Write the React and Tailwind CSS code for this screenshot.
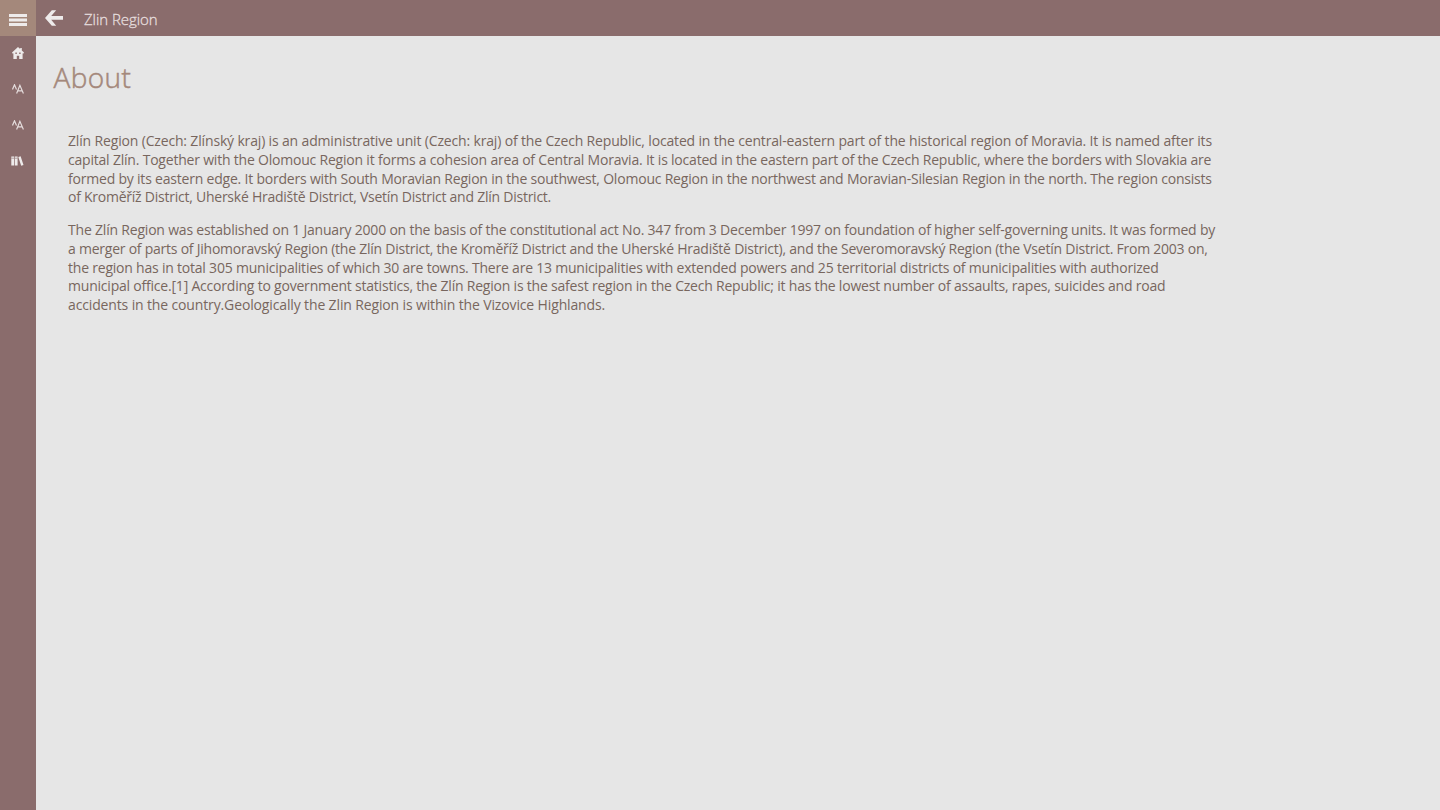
import React from 'react'

const paragraphs = [
  [
    { text: 'Zlín Region (Czech: Zlínský kraj) is an administrative unit (Czech: kraj) of the Czech Republic, located in the central-eastern part of the historical region of Moravia. It is named after its', tracking: 'tracking-[-0.16px]' },
    { text: 'capital Zlín. Together with the Olomouc Region it forms a cohesion area of Central Moravia. It is located in the eastern part of the Czech Republic, where the borders with Slovakia are', tracking: 'tracking-[-0.205px]' },
    { text: 'formed by its eastern edge. It borders with South Moravian Region in the southwest, Olomouc Region in the northwest and Moravian-Silesian Region in the north. The region consists', tracking: 'tracking-[-0.206px]' },
    { text: 'of Kroměříž District, Uherské Hradiště District, Vsetín District and Zlín District.', tracking: 'tracking-[-0.244px]' },
  ],
  [
    { text: 'The Zlín Region was established on 1 January 2000 on the basis of the constitutional act No. 347 from 3 December 1997 on foundation of higher self-governing units. It was formed by', tracking: 'tracking-[-0.2px]' },
    { text: 'a merger of parts of Jihomoravský Region (the Zlín District, the Kroměříž District and the Uherské Hradiště District), and the Severomoravský Region (the Vsetín District. From 2003 on,', tracking: 'tracking-[-0.235px]' },
    { text: 'the region has in total 305 municipalities of which 30 are towns. There are 13 municipalities with extended powers and 25 territorial districts of municipalities with authorized', tracking: 'tracking-[-0.213px]' },
    { text: 'municipal office.[1] According to government statistics, the Zlín Region is the safest region in the Czech Republic; it has the lowest number of assaults, rapes, suicides and road', tracking: 'tracking-[-0.21px]' },
    { text: 'accidents in the country.Geologically the Zlin Region is within the Vizovice Highlands.', tracking: 'tracking-[-0.138px]' },
  ],
]

const HomeIcon = () => (
  <svg width="12" height="12" viewBox="0 0 12 12" fill="#eeebeb">
    <path fillRule="evenodd" d="M6 0 L8.2 2 V1 H9.8 V3.5 L12 5.6 L11.2 6.7 L10.6 6.2 V12 H7.2 V8.8 H4.8 V12 H1.4 V6.2 L0.8 6.7 L0 5.6 Z M3.4 5.6 V7 H4.8 V5.6 Z M7.2 5.6 V7 H8.6 V5.6 Z" />
  </svg>
)

const FontIcon = () => (
  <svg className="mb-px" width="12" height="10" viewBox="0 0 12 10" fill="none" stroke="#e6dede" strokeWidth="1.15">
    <path d="M0.5 5.4 L2.5 0.7 L4.5 5.4" />
    <path d="M4.6 9.5 L7.9 1.3 L11.4 9.5 M5.7 6.8 H10.2" />
  </svg>
)

const LibraryIcon = () => (
  <svg className="mr-px" width="13" height="10" viewBox="0 0 13 10" fill="#eeebeb">
    <path d="M0.3 0.4 H3.1 V9.6 H0.3 Z M3.8 0.4 H6.6 V9.6 H3.8 Z M7.3 0.9 L9.6 0.2 L12.5 8.9 L10.2 9.7 Z" />
    <path d="M0.3 2.2 H3.1 M3.8 2.2 H6.6" stroke="#8a6c6c" strokeWidth="0.6" />
  </svg>
)

const items = [HomeIcon, FontIcon, FontIcon, LibraryIcon]

const App = () => {
  return (
    <div className="flex h-[810px] w-[1440px] overflow-hidden bg-[#e6e6e6] font-['Open_Sans','Noto_Sans',sans-serif]">
      <nav className="flex w-9 shrink-0 flex-col bg-[#8a6c6c]">
        <button className="flex h-9 w-9 items-center justify-center bg-[#a4887b] pt-1">
          <svg width="18" height="12" viewBox="0 0 18 12" fill="#eeebeb">
            <path d="M0 0 H18 V3 H0 Z M0 4.5 H18 V7.5 H0 Z M0 9 H18 V12 H0 Z" />
          </svg>
        </button>
        {items.map((Icon, i) => (
          <button key={i} className="flex h-9 w-9 items-center justify-center pb-0.5">
            <Icon />
          </button>
        ))}
      </nav>
      <div className="flex min-w-0 flex-1 flex-col">
        <header className="flex h-9 shrink-0 items-center bg-[#8a6c6c] pl-[9px]">
          <svg className="mb-px" width="18" height="16" viewBox="0 0 18 16" fill="#eeebeb">
            <path d="M0 8 L6.8 0.2 H11.2 L6.2 6 H18 V9.8 H6.2 L11.2 15.7 H6.8 Z" />
          </svg>
          <span className="ml-[21px] mt-px text-[15px] leading-5 font-light tracking-[-0.05px] text-[#e6dede] [-webkit-text-stroke:0.3px]">Zlin Region</span>
        </header>
        <main className="pl-[17px]">
          <h1 className="pt-[21px] pl-[0.5px] text-[28px] leading-[40px] font-light tracking-[0.4px] text-[#a4887b] [-webkit-text-stroke:0.5px]">About</h1>
          <div className="flex flex-col gap-[14px] pt-[35px] pl-[15px] text-[14px] leading-[18.75px] text-[#78665e]">
            {paragraphs.map((lines, i) => (
              <p key={i}>
                {lines.map((line) => (
                  <span key={line.text} className={`block whitespace-nowrap ${line.tracking}`}>{line.text}</span>
                ))}
              </p>
            ))}
          </div>
        </main>
      </div>
    </div>
  )
}

export default App
